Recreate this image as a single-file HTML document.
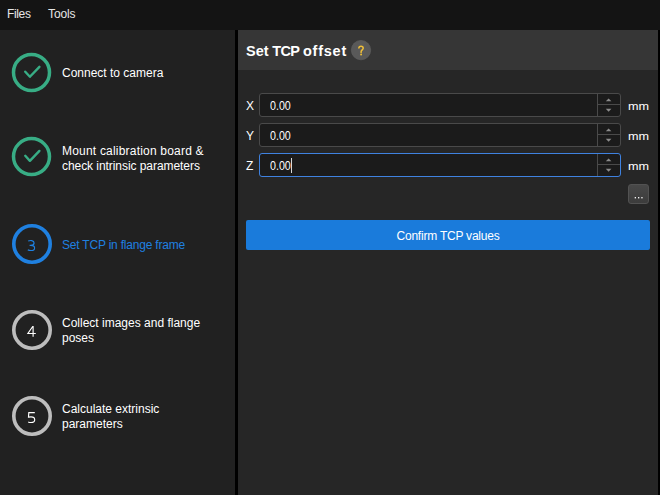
<!DOCTYPE html>
<html><head><meta charset="utf-8">
<style>
*{margin:0;padding:0;box-sizing:border-box}
html,body{width:660px;height:495px;overflow:hidden;background:#000}
body{position:relative;font-family:"Liberation Sans",sans-serif;font-size:12px;color:#fff}
.abs{position:absolute}
.t{position:absolute;white-space:pre;line-height:15px;font-size:12px}
#menu{left:0;top:0;width:660px;height:30px;background:#141414}
#left{left:0;top:30px;width:235px;height:465px;background:#212121}
#div{left:235px;top:30px;width:3px;height:465px;background:#000}
#right{left:238px;top:30px;width:420px;height:465px;background:#262626}
#rb{left:658px;top:30px;width:2px;height:465px;background:#000}
#hdr{left:238px;top:30px;width:420px;height:40px;background:#363636}
.inp{position:absolute;left:259px;width:362px;height:24px;border:1px solid #4a4a4a;border-radius:3px;background:#1b1b1b}
.inp.f{border-color:#3f82e0}
.spin{position:absolute;right:0;top:0;width:23px;height:22px;border-left:1px solid #4a4a4a}
.spin .h{position:absolute;left:0;top:10px;width:22px;height:1px;background:#4a4a4a}
.hd{top:42px;font-size:14.5px;font-weight:bold;line-height:18px}
.mm{left:627.5px;font-size:11.3px;transform:scaleX(1.12);transform-origin:0 0}
.val{position:absolute;left:270px;transform:scaleX(0.89);transform-origin:0 0}
</style></head><body>
<div id="menu" class="abs"></div>
<div class="t" style="left:7px;top:7px;color:#e6e6e6;letter-spacing:-0.35px">Files</div>
<div class="t" style="left:48px;top:7px;color:#e6e6e6;letter-spacing:-0.1px">Tools</div>

<div id="left" class="abs"></div>
<div id="div" class="abs"></div>
<div id="right" class="abs"></div>
<div id="rb" class="abs"></div>
<div id="hdr" class="abs"></div>

<div class="t" style="left:62px;top:66px">Connect to camera</div>
<div class="t" style="left:62px;top:144px;letter-spacing:0.2px">Mount calibration board &amp;</div>
<div class="t" style="left:62px;top:159px;letter-spacing:-0.06px">check intrinsic parameters</div>
<div class="t" style="left:62px;top:238px;color:#1f80e0;letter-spacing:-0.2px">Set TCP in flange frame</div>
<div class="t" style="left:62px;top:316px">Collect images and flange
poses</div>
<div class="t" style="left:62px;top:402px">Calculate extrinsic
parameters</div>

<!-- header -->
<div class="t hd" style="left:246px">Set</div>
<div class="t hd" style="left:272.3px;letter-spacing:-0.75px">TCP</div>
<div class="t hd" style="left:303px;letter-spacing:0.75px">offset</div>

<!-- inputs -->
<div class="t" style="left:246px;top:99px">X</div>
<div class="inp" style="top:93px"><div class="spin"><div class="h"></div></div></div>
<div class="t val" style="top:99px">0.00</div>
<div class="t mm" style="top:99px">mm</div>

<div class="t" style="left:246px;top:129px">Y</div>
<div class="inp" style="top:123px"><div class="spin"><div class="h"></div></div></div>
<div class="t val" style="top:129px">0.00</div>
<div class="t mm" style="top:129px">mm</div>

<div class="t" style="left:246px;top:159px">Z</div>
<div class="inp f" style="top:153px"><div class="spin"><div class="h"></div></div></div>
<div class="t val" style="top:159px">0.00</div>
<div class="abs" style="left:291px;top:158px;width:1px;height:15px;background:#d8d8d8"></div>
<div class="t mm" style="top:159px">mm</div>

<!-- ... button -->
<div class="abs" style="left:628px;top:184px;width:21px;height:20px;border:1px solid #525252;border-radius:3px;background:linear-gradient(#484848,#3c3c3c)"></div>


<!-- confirm -->
<div class="abs" style="left:246px;top:220px;width:404px;height:30px;border-radius:2px;background:#1a7bdb"></div>
<div class="t" style="left:246px;top:229px;width:404px;text-align:center;letter-spacing:-0.22px">Confirm TCP values</div>

<svg class="abs" style="left:0;top:0" width="660" height="495" viewBox="0 0 660 495">
<g fill="none" stroke="#38ad85">
<circle cx="31.5" cy="72.5" r="18" stroke-width="3.5"/>
<polyline points="25.25,71.7 29.9,76.75 39.4,66.85" stroke-width="2.4" stroke-linecap="round" stroke-linejoin="round"/>
<circle cx="31.5" cy="156.6" r="18" stroke-width="3.5"/>
<polyline points="25.25,155.8 29.9,160.85 39.4,150.95" stroke-width="2.4" stroke-linecap="round" stroke-linejoin="round"/>
</g>
<circle cx="32" cy="244" r="18.2" fill="none" stroke="#1f80e0" stroke-width="3.6"/>
<circle cx="32" cy="330" r="18.2" fill="none" stroke="#bdbdbd" stroke-width="3.6"/>
<circle cx="32" cy="416" r="18.2" fill="none" stroke="#bdbdbd" stroke-width="3.6"/>
<!-- digits -->
<path d="M28.2,241 C29.4,240.5 30.8,240.4 31.8,240.6 C33.3,240.9 34.1,241.9 34.1,243 C34.1,244.4 32.8,245.3 30.8,245.3 L29.6,245.3 M30.8,245.3 C33.3,245.3 34.6,246.5 34.6,247.9 C34.6,249.6 33,250.5 31,250.5 C29.8,250.5 28.7,250.3 27.8,249.9" fill="none" stroke="#1f80e0" stroke-width="1.15"/>
<path d="M33.1,336.8 L33.1,326.5 L32.7,326.5 L27.9,333.5 L35.8,333.5" fill="none" stroke="#fff" stroke-width="1.15" stroke-linejoin="miter"/>
<path d="M34.8,412.6 L28.8,412.6 L28.5,417.1 C29.3,416.9 30.1,416.8 31,416.8 C33.3,416.8 34.7,418.1 34.7,419.7 C34.7,421.5 33.2,422.5 31.1,422.5 C30,422.5 29,422.3 28.2,421.9" fill="none" stroke="#fff" stroke-width="1.15"/>
<!-- help -->
<circle cx="361" cy="50.1" r="9.7" fill="#595959" stroke="#616161" stroke-width="0.6"/>
<path d="M358.9,48.1 C358.9,46.7 359.8,46.3 361,46.3 C362.3,46.3 363.2,47.1 363.2,48.2 C363.2,49.7 361.1,50.1 361.1,51.7 L361.1,52.5" fill="none" stroke="#f0c039" stroke-width="1.5" stroke-linecap="round"/>
<circle cx="361.1" cy="54.5" r="0.95" fill="#f0c039"/>
<g fill="#f2f2f2"><rect x="634.7" y="197" width="1.3" height="1.4"/><rect x="638" y="197" width="1.3" height="1.4"/><rect x="641.3" y="197" width="1.3" height="1.4"/></g>
<!-- spinner arrows -->
<g fill="#8c8c8c">
<polygon points="605.8,101.3 611.4,101.3 608.6,98.4"/>
<polygon points="605.8,108.8 611.4,108.8 608.6,111.7"/>
<polygon points="605.8,131.3 611.4,131.3 608.6,128.4"/>
<polygon points="605.8,138.8 611.4,138.8 608.6,141.7"/>
<polygon points="605.8,161.3 611.4,161.3 608.6,158.4"/>
<polygon points="605.8,168.8 611.4,168.8 608.6,171.7"/>
</g>
</svg>
</body></html>
